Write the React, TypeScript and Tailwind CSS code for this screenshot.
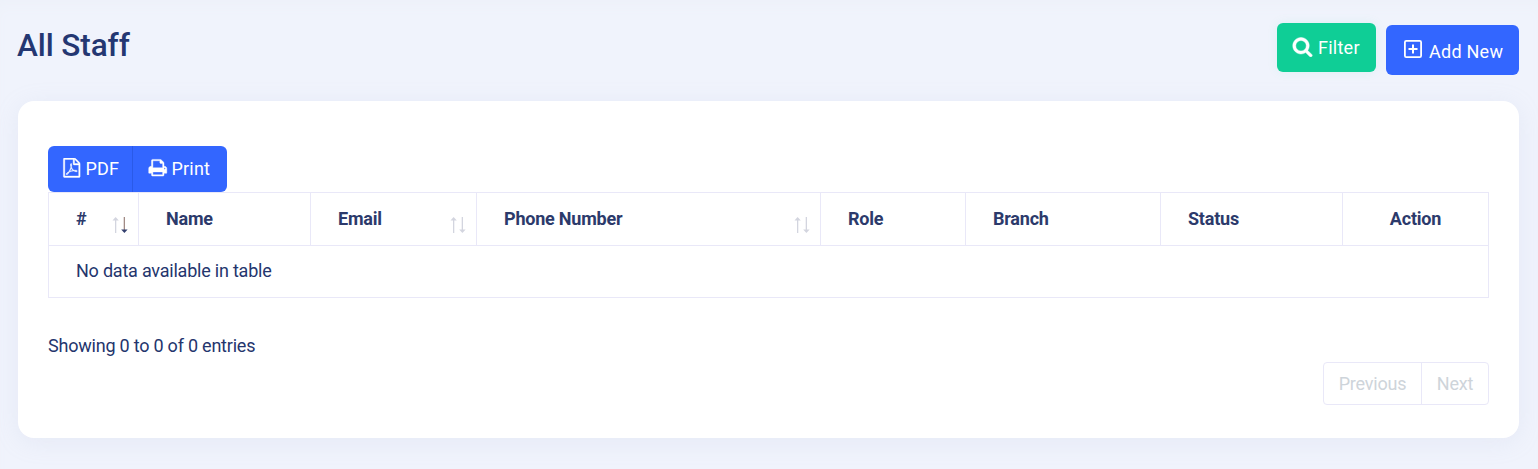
type IconProps = { size: number; path: string; className?: string };

const SEARCH =
  "M1216 832q0-185-131.5-316.5t-316.5-131.5-316.5 131.5-131.5 316.5 131.5 316.5 316.5 131.5 316.5-131.5 131.5-316.5zm512 832q0 52-38 90t-90 38q-54 0-90-38l-343-342q-179 124-399 124-143 0-273.5-55.5t-225-150-150-225-55.5-273.5 55.5-273.5 150-225 225-150 273.5-55.5 273.5 55.5 225 150 150 225 55.5 273.5q0 220-124 399l343 343q37 37 37 90z";
const PRINT =
  "M448 1536h896v-256h-896v256zm0-640h896v-384h-160q-40 0-68-28t-28-68v-160h-640v640zm1152 64q0-26-19-45t-45-19-45 19-19 45 19 45 45 19 45-19 19-45zm128 0v416q0 13-9.5 22.5t-22.5 9.5h-224v160q0 40-28 68t-68 28h-960q-40 0-68-28t-28-68v-160h-224q-13 0-22.5-9.5t-9.5-22.5v-416q0-79 56.5-135.5t135.5-56.5h64v-544q0-40 28-68t68-28h672q40 0 88 20t76 48l152 152q28 28 48 76t20 88v256h64q79 0 135.5 56.5t56.5 135.5z";
const FILE_PDF =
  "M1596 380q28 28 48 76t20 88v1152q0 40-28 68t-68 28h-1344q-40 0-68-28t-28-68v-1600q0-40 28-68t68-28h896q40 0 88 20t76 48zm-444-244v376h376q-10-29-22-41l-313-313q-12-12-41-22zm384 1528v-1024h-416q-40 0-68-28t-28-68v-416h-768v1536h1280zm-514-593q33 26 84 56 59-7 117-7 147 0 177 49 16 22 2 52 0 1-1 2l-2 2v1q-6 38-71 38-48 0-115-20t-130-53q-221 24-392 83-153 262-242 262-15 0-28-7l-24-12q-1-1-6-5-10-10-6-36 9-40 56-91.5t132-96.5q14-9 23 6 2 2 2 4 52-85 107-197 68-136 104-262-24-82-30.5-159.5t6.5-127.5q11-40 42-40h22q23 0 35 15 18 21 9 68-2 6-4 8 1 3 1 8v30q-2 123-14 192 55 164 146 238zm-576 411q52-24 137-158-51 40-87.5 84t-49.5 74zm398-920q-15 42-2 132 1-7 7-44 0-3 7-43 1-4 4-8-1-1-1-2-1-2-1-3-1-22-13-36 0 1-1 2v2zm-124 661q135-54 284-81-2-1-13-9.5t-16-13.5q-76-67-127-176-27 86-83 197-30 56-45 83zm646-16q-24-24-140-24 76 28 124 28 14 0 18-1 0-1-2-3z";

function Icon({ size, path, className }: IconProps) {
  return (
    <svg
      width={size}
      height={size}
      viewBox="0 0 1792 1792"
      fill="currentColor"
      stroke="currentColor"
      strokeWidth="36"
      className={className}
    >
      <path d={path} />
    </svg>
  );
}

function PlusSquare() {
  return (
    <svg width="18" height="18" viewBox="0 0 18 18" fill="none" stroke="currentColor">
      <rect x="0.9" y="0.9" width="16.2" height="16.2" rx="1.4" strokeWidth="1.8" />
      <path d="M9 4.5v9M4.5 9h9" strokeWidth="2" />
    </svg>
  );
}

function SortArrows({ active = false }: { active?: boolean }) {
  return (
    <svg width="16" height="16" viewBox="0 0 16 16" className="mt-3 -mr-[17px] shrink-0">
      <g fill="#d3d5df">
        <path d="M3 1h1.3v15H3z" />
        <path d="M3.6 0 6.8 3.6H.5z" />
      </g>
      <path d="M11.7 0H13v15h-1.3z" fill={active ? "#a18b86" : "#d3d5df"} />
      <path d="M12.4 16l3.2-3.6H9.2z" fill={active ? "#34406f" : "#d3d5df"} />
    </svg>
  );
}

const columns: { label: string; width: string; sort?: "on" | "off"; center?: boolean }[] = [
  { label: "#", width: "w-[90px]", sort: "on" },
  { label: "Name", width: "w-[172px]" },
  { label: "Email", width: "w-[166px]", sort: "off" },
  { label: "Phone Number", width: "w-[344px]", sort: "off" },
  { label: "Role", width: "w-[145px]" },
  { label: "Branch", width: "w-[195px]" },
  { label: "Status", width: "w-[182px]" },
  { label: "Action", width: "w-[147px] border-r", center: true },
];

export default function App() {
  return (
    <div className="h-[469px] w-[1538px] overflow-hidden bg-[#f0f3fc] font-['Roboto',sans-serif] text-lg text-[#24356d] shadow-[inset_0_10px_16px_-8px_#ecf0f8]">
      <header className="flex h-[101px] items-start justify-between pr-[19px] pl-[17px]">
        <h1 className="pt-[27px] text-[31.5px] leading-[38px] font-medium tracking-[-0.1px] text-[#243772]">
          All Staff
        </h1>
        <div className="flex items-start gap-2.5 pt-[23px] tracking-[0.25px] text-white">
          <button className="flex h-[49px] w-[99px] items-center rounded-md bg-[#0fce96] pl-[15px] shadow-[0_0_12px_rgba(15,206,150,0.08)]">
            <Icon size={21} path={SEARCH} className="-mt-0.5" />
            <span className="ml-[5px]">Filter</span>
          </button>
          <button className="mt-0.5 flex h-[50px] w-[133px] items-center rounded-md bg-[#3366ff] pl-[18px]">
            <span className="-mt-0.5">
              <PlusSquare />
            </span>
            <span className="mt-1 ml-[7px]">Add New</span>
          </button>
        </div>
      </header>

      <main className="mx-[18px] mr-[19px] h-[337px] rounded-2xl bg-white px-[30px] pt-[45px] shadow-[0_4px_25px_rgba(168,180,208,0.15)]">
        <div className="flex h-[46px] w-[179px] overflow-hidden rounded-md bg-[#3366ff] tracking-[0.2px] text-white">
          <button className="flex w-[85px] items-center border-r border-[#2a5ae8] pl-3.5">
            <Icon size={19.5} path={FILE_PDF} className="-mt-0.5" />
            <span className="ml-1">PDF</span>
          </button>
          <button className="flex items-center pl-[15px]">
            <Icon size={19.5} path={PRINT} className="-mt-0.5" />
            <span className="ml-1">Print</span>
          </button>
        </div>

        <section className="w-[1441px] tracking-[-0.22px]">
          <div className="flex h-[54px] border-y border-[#e9e8f8] text-lg font-bold text-[#2c3a6b]">
            {columns.map((c) => (
              <div
                key={c.label}
                className={`flex items-center border-l border-[#e9e8f8] ${c.width} ${c.center ? "justify-center" : "justify-between px-[27px]"}`}
              >
                <span>{c.label}</span>
                {c.sort && <SortArrows active={c.sort === "on"} />}
              </div>
            ))}
          </div>
          <div className="flex h-[52px] items-center border-x border-b border-[#e9e8f8] pb-0.5 pl-[27px]">
            No data available in table
          </div>
        </section>

        <p className="mt-[34px] leading-7 tracking-[-0.22px]">Showing 0 to 0 of 0 entries</p>
        <div className="mt-0.5 flex justify-end">
          <div className="flex h-[43px] w-[166px] rounded-[4px] border border-[#e9e8f8] tracking-[-0.2px] text-[#ced4da]">
            <span className="flex w-[98px] items-center justify-center border-r border-[#e9e8f8]">Previous</span>
            <span className="flex flex-1 items-center justify-center">Next</span>
          </div>
        </div>
      </main>
    </div>
  );
}
